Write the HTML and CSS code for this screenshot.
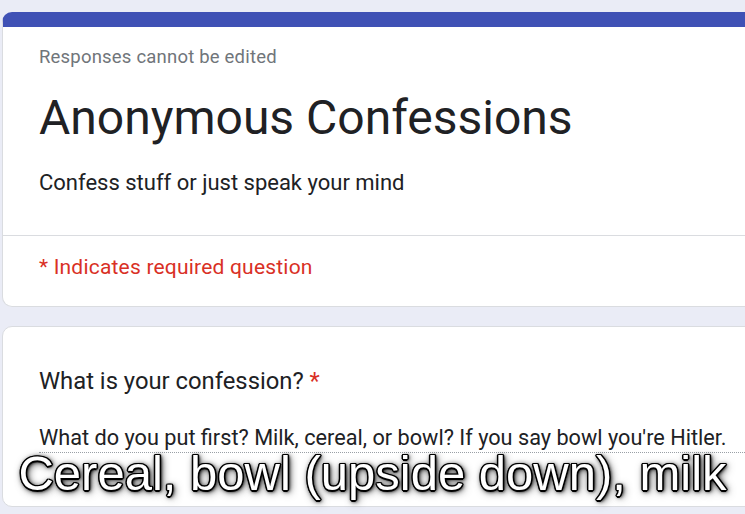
FILE: index.html
```html
<!DOCTYPE html>
<html>
<head>
<meta charset="utf-8">
<link rel="stylesheet" href="styles.css">
</head>
<body>
<div class="page">
  <div class="card header-card">
    <div class="header-main">
      <div class="note">Responses cannot be edited</div>
      <div class="title">Anonymous Confessions</div>
      <div class="desc">Confess stuff or just speak your mind</div>
    </div>
    <div class="header-foot">
      <div class="required">* Indicates required question</div>
    </div>
  </div>
  <div class="card question-card">
    <div class="question">What is your confession? <span class="star">*</span></div>
    <div class="qdesc">What do you put first? Milk, cereal, or bowl? If you say bowl you're Hitler.</div>
    <div class="answer-line"></div>
  </div>
</div>
<div class="caption">Cereal, bowl (upside down), milk</div>
</body>
</html>
```
FILE: styles.css
```css
html, body {
  margin: 0;
  padding: 0;
}
body {
  background: #eaecf6;
  width: 745px;
  height: 514px;
  overflow: hidden;
  position: relative;
  font-family: Roboto, "Liberation Sans", sans-serif;
  color: #202124;
}
.page {
  padding: 12px 0 0 2px;
  display: flex;
  flex-direction: column;
  gap: 19px;
}
.card {
  width: 790px;
  background: #fff;
  border: 1px solid #dadce0;
  border-radius: 10px;
  box-sizing: border-box;
}
.header-card {
  border-top: 15px solid #3f51b5;
  height: 295px;
}
.header-main {
  padding: 18px 0 0 36px;
  height: 209px;
  box-sizing: border-box;
  border-bottom: 1px solid #dadce0;
}
.note {
  font-size: 18.5px;
  color: #70757a;
  line-height: 24px;
  letter-spacing: 0.2px;
}
.title {
  font-size: 48px;
  line-height: 56px;
  margin-top: 21px;
  color: #202124;
}
.desc {
  font-size: 22px;
  line-height: 28px;
  margin-top: 23px;
}
.header-foot {
  padding: 17px 0 0 36px;
}
.required {
  font-size: 21px;
  line-height: 28px;
  color: #d93025;
  letter-spacing: 0.2px;
}
.question-card {
  height: 181px;
  padding: 39px 0 0 36px;
}
.question {
  font-size: 23.8px;
  line-height: 30px;
}
.star {
  color: #d93025;
}
.qdesc {
  margin-top: 30px;
  font-size: 21.7px;
  line-height: 24px;
  white-space: nowrap;
}
.answer-line {
  margin-top: 2px;
  border-bottom: 1px dotted #9aa0a6;
}
.caption {
  position: absolute;
  left: 0;
  right: 0;
  top: 443px;
  text-align: center;
  font-family: "Liberation Sans", Arial, sans-serif;
  font-size: 49px;
  line-height: 60px;
  color: #fff;
  text-shadow:
    1.5px 0 0 #000, -1.5px 0 0 #000, 0 1.5px 0 #000, 0 -1.5px 0 #000,
    1px 1px 0 #000, -1px 1px 0 #000, 1px -1px 0 #000, -1px -1px 0 #000,
    1px 1px 3px #000, 1px 1px 5px #000, 2px 2px 8px rgba(0,0,0,0.7);
}
```
